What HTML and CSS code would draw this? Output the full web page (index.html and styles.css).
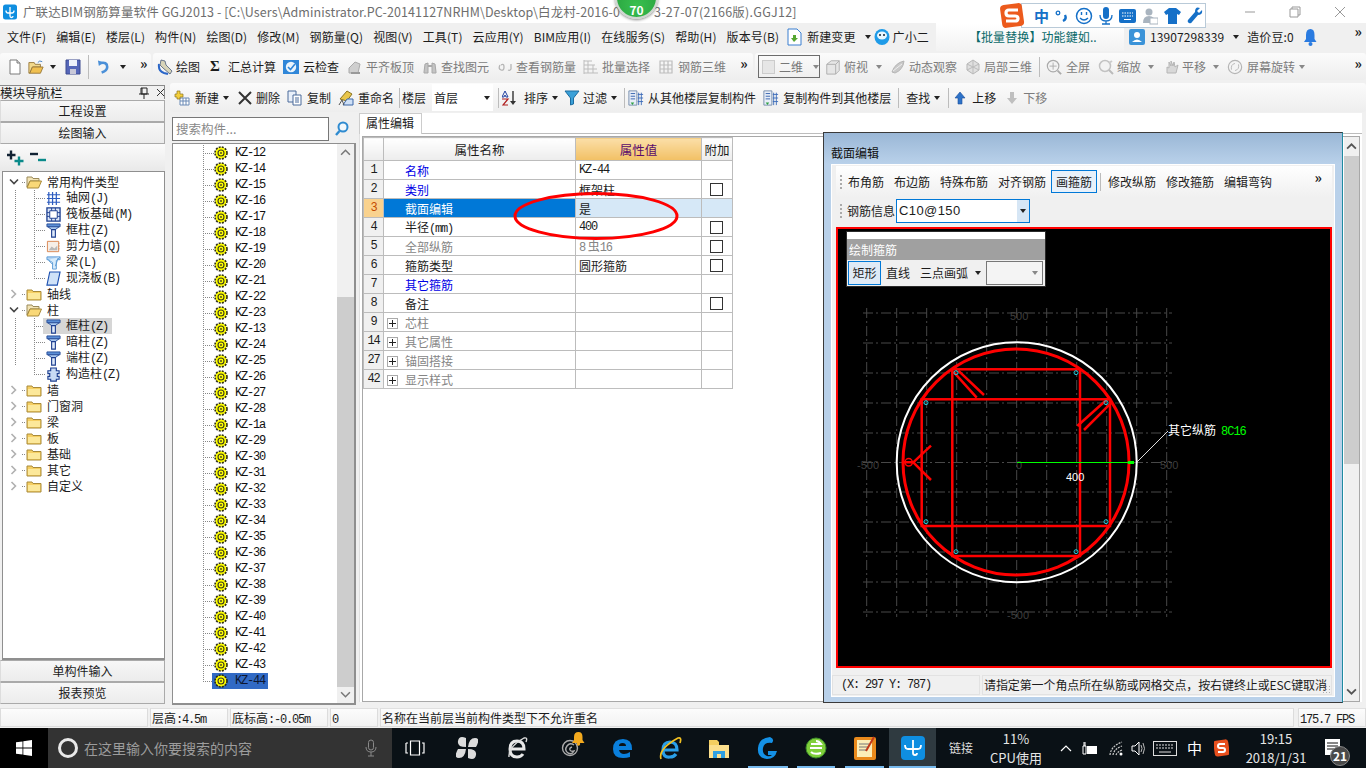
FILE: index.html
```html
<!DOCTYPE html>
<html lang="zh-CN">
<head>
<meta charset="utf-8">
<title>广联达BIM钢筋算量软件 GGJ2013</title>
<link rel="stylesheet" href="styles.css">
</head>
<body>
<svg class="defs" width="0" height="0">
  <symbol id="folder" viewBox="0 0 16 16"><path d="M1 4h5l1 1.500h8V14H1z" fill="#f6cf63" stroke="#a88a3a"/><path d="M2 7h12v6H2z" fill="#fce89a"/></symbol>
  <symbol id="folderopen" viewBox="0 0 16 16"><path d="M1 3h5l1 1.500h6V7H4L1 13z" fill="#f2e3b5" stroke="#9a8a5a"/><path d="M4 7h11.500l-3 7H1z" fill="#f9d878" stroke="#a88a3a"/></symbol>
  <symbol id="column" viewBox="0 0 16 16"><path d="M1 1h14v3H1z" fill="#5b8fd6" stroke="#2a4f9a"/><path d="M2 4l4 3h4l4-3z" fill="#a9c8ef" stroke="#2a4f9a"/><path d="M6 7h4v8H6z" fill="#dfeafa" stroke="#1d3f90" stroke-width="1.200"/></symbol>
  <symbol id="kz" viewBox="0 0 14 14"><circle cx="7" cy="7" r="5.800" fill="#ff0"/><circle cx="7" cy="7" r="6" fill="none" stroke="#2e2e10" stroke-width="1.600" stroke-dasharray="2 1.150"/><circle cx="7" cy="7" r="3" fill="#ff0" stroke="#3a3a20" stroke-width="1.100"/><circle cx="7" cy="7" r=".9" fill="#3a3a20"/></symbol>
  <symbol id="grid" viewBox="0 0 16 16"><path d="M3 1v14M7 1v14M11 1v14M1 4h14M1 8h14M1 12h14" stroke="#2d5cc0" stroke-width="1.300" fill="none"/></symbol>
  <symbol id="raft" viewBox="0 0 16 16"><path d="M1 1h14v14H1z" fill="#dce7f8" stroke="#1d3f90" stroke-width="1.400"/><path d="M4 4h8v8H4z" fill="#fff" stroke="#1d3f90"/><path d="M1 6h3M1 10h3M12 6h3M12 10h3M6 1v3M10 1v3M6 12v3M10 12v3" stroke="#1d3f90"/></symbol>
  <symbol id="wall" viewBox="0 0 16 16"><path d="M1.500 2.500h12v11h-12z" fill="#f6efe8" stroke="#d98550"/><path d="M3 12l3-4 3 2 3-3v5z" fill="#b9b9b9"/><path d="M14 4v1M14 7v1M14 10v1" stroke="#d98550"/></symbol>
  <symbol id="beam" viewBox="0 0 16 16"><path d="M1 2h14v3H1z" fill="#b6d5f3" stroke="#5b9bd5"/><path d="M2 5l5 3v7h4V6l4-4" fill="#d9ecfb" stroke="#5b9bd5"/><path d="M3 6l4 4M13 3l-3 9" stroke="#5b9bd5"/></symbol>
  <symbol id="slab" viewBox="0 0 16 16"><path d="M4 1h11l-3 14H1z" fill="#cfe2f8" stroke="#1d50b0" stroke-width="1.200"/></symbol>
  <symbol id="ccol" viewBox="0 0 16 16"><path d="M5 1h6v3h3v3h-2v3h2v3h-3v2H5v-2H2v-3h2V7H2V4h3z" fill="#c8daf4" stroke="#1d3f90" stroke-width="1.200"/></symbol>
  <symbol id="new" viewBox="0 0 16 16"><path d="M3 1h7l3 3v11H3z" fill="#fff" stroke="#7a7a7a"/><path d="M10 1v3h3" fill="#ddd" stroke="#7a7a7a"/></symbol>
  <symbol id="open" viewBox="0 0 18 16"><path d="M1 3h6l1 2h6v3H5l-3 7H1z" fill="#f2d98c" stroke="#96773a"/><path d="M5 8h12l-3 7H2z" fill="#f0c050" stroke="#96773a"/><path d="M11 3q2-3 5-1" stroke="#3a7ac0" fill="none"/></symbol>
  <symbol id="save" viewBox="0 0 16 16"><path d="M1 1h14v14H1z" fill="#5566b8" stroke="#3c4a90"/><path d="M4 1h8v6H4z" fill="#eef1fa"/><path d="M5 10h6v5H5z" fill="#c8c8d8"/></symbol>
  <symbol id="undo" viewBox="0 0 14 16"><path d="M3 4q8-2 8 4 0 4-6 6" fill="none" stroke="#4b90d8" stroke-width="2.800"/><path d="M1 1l1 6 5-4z" fill="#4b90d8"/></symbol>
  <symbol id="draw" viewBox="0 0 16 16"><path d="M4 1l4 1 1 4 6 6-2 3-7-6-3-3z" fill="#d8d4b8" stroke="#4a5a7a" stroke-width=".8"/><path d="M2 5q-1 7 5 9l4 1" fill="none" stroke="#2a66c8" stroke-width="2"/></symbol>
  <symbol id="cloud" viewBox="0 0 16 16"><path d="M0 1h16v14H0z" fill="#2f86d8"/><circle cx="8" cy="8" r="5.200" fill="#eaf4fc"/><path d="M5 8l2.500 2.500L12 5" stroke="#2f86d8" stroke-width="1.600" fill="none"/></symbol>
  <symbol id="gflat" viewBox="0 0 16 16"><path d="M2 14V9l6-6 5 2-2 9z" fill="#cfcfcf" stroke="#aaa"/><path d="M4 14h9" stroke="#999" stroke-width="2"/></symbol>
  <symbol id="gbino" viewBox="0 0 16 16"><path d="M2 13l1-8 3-1v10H2zM14 13l-1-8-3-1v10h4z" fill="#c4c4c4" stroke="#a8a8a8"/><path d="M6 7h4" stroke="#aaa" stroke-width="2"/></symbol>
  <symbol id="grebar" viewBox="0 0 16 16"><path d="M3 6Q1 10 4 11t3-3-3-2M14 5v5q-1 2-3 1" fill="none" stroke="#b5b5b5" stroke-width="1.300"/></symbol>
  <symbol id="gbatch" viewBox="0 0 16 16"><path d="M1 1v14M1 2h8M1 6h11M1 10h13M1 14h14M5 2v12M10 6v8" stroke="#bdbdbd" fill="none"/></symbol>
  <symbol id="g3d" viewBox="0 0 16 16"><path d="M2 2h12v12H2zM6 2v12M10 2v12M2 6h12M2 10h12" stroke="#bdbdbd" fill="none" stroke-width="1.200"/></symbol>
  <symbol id="gcube" viewBox="0 0 18 18"><path d="M2 6l5-4h9v11l-4 4H2z" fill="#e6e6e6" stroke="#aaa"/><path d="M2 6h10v11M12 6l4-4" fill="none" stroke="#aaa"/></symbol>
  <symbol id="gorbit" viewBox="0 0 16 16"><path d="M2 13Q5 4 14 2q-1 9-9 12z" fill="#c9c9c9" stroke="#b5b5b5"/><path d="M3 12L12 5" stroke="#eee"/></symbol>
  <symbol id="glocal" viewBox="0 0 16 16"><path d="M8 1l6 4v6l-6 4-6-4V5z" fill="#e0e0e0" stroke="#b5b5b5"/><path d="M8 1v14M2 5l12 6M14 5L2 11" stroke="#bbb"/></symbol>
  <symbol id="gfull" viewBox="0 0 18 18"><circle cx="8" cy="8" r="6.500" fill="#f3f3f3" stroke="#aaa" stroke-width="1.300"/><path d="M8 4v8M4 8h8" stroke="#aaa"/><path d="M13 13l4 4" stroke="#aaa" stroke-width="2"/></symbol>
  <symbol id="gzoom" viewBox="0 0 16 16"><circle cx="7" cy="7" r="5.500" fill="#f3f3f3" stroke="#c2c2c2" stroke-width="1.500"/><path d="M11 11l4 4" stroke="#bbb" stroke-width="2"/><path d="M11 4l3-2" stroke="#ccc" stroke-width="2"/></symbol>
  <symbol id="gpan" viewBox="0 0 16 16"><path d="M3 14V8l2 1V3l2 4V2l2 5 1-4 1 5 3-2-2 8H3z" fill="#d8d8d8" stroke="#b5b5b5"/></symbol>
  <symbol id="grot" viewBox="0 0 18 18"><circle cx="9" cy="9" r="7.500" fill="#f4f4f4" stroke="#b5b5b5" stroke-width="1.300"/><path d="M5 12q-1-6 4-7M13 6q1 6-4 7" stroke="#b5b5b5" fill="none"/></symbol>
  <symbol id="addnew" viewBox="0 0 16 16"><path d="M6 8h9v7H6z" fill="#fff" stroke="#6a8ab5"/><path d="M6 11h9M9 8v7M12 8v7" stroke="#6a8ab5"/><path d="M3 1h3v3h3v3H6v2H3V7H1V4h2z" fill="#f4cf3c" stroke="#8a7320" stroke-width=".7"/></symbol>
  <symbol id="del" viewBox="0 0 16 16"><path d="M2 2l12 12M14 2L2 14" stroke="#333" stroke-width="2"/></symbol>
  <symbol id="copy" viewBox="0 0 16 16"><path d="M1 1h8v11H1z" fill="#e9f0fa" stroke="#4a6a9a"/><path d="M6 5h8v10H6z" fill="#fff" stroke="#4a6a9a"/><path d="M8 8h4M8 10h4M8 12h4" stroke="#4a6a9a"/></symbol>
  <symbol id="rename" viewBox="0 0 16 16"><path d="M2 9l7-8 5 3-5 7z" fill="#e8c54a" stroke="#8a7320"/><path d="M9 9h6v6H5z" fill="#cfe0f6" stroke="#3a66a8"/><path d="M1 15l3-5 2 5" stroke="#555" fill="none"/></symbol>
  <symbol id="sort" viewBox="0 0 16 16"><path d="M3 1l3 6H4L3 5 2 7H0z" fill="none" stroke="#2040a0"/><path d="M0 9h6L1 15h5" fill="none" stroke="#b02020" stroke-width="1.200"/><path d="M11 1v12" stroke="#333" stroke-width="1.400"/><path d="M8 11l3 4 3-4z" fill="#333"/></symbol>
  <symbol id="filter" viewBox="0 0 16 16"><path d="M1 1h14L9.500 8v6L6.500 15V8z" fill="#3aa0d8" stroke="#1c6ca0"/></symbol>
  <symbol id="cpfrom" viewBox="0 0 18 18"><path d="M1 1h9v16H1z" fill="#e8eef8" stroke="#7088a8"/><path d="M3 4h5M3 7h5M3 10h5" stroke="#2a5aa8"/><path d="M3 14h4l-2 3z" fill="#2ca040"/><path d="M12 3v14M15 3v14M11 5h6M11 9h6M11 13h6" stroke="#3a6ab8"/></symbol>
  <symbol id="up" viewBox="0 0 12 16"><path d="M6 2l5 6H8v6H4V8H1z" fill="#2d72c8" stroke="#1c4f9a" stroke-width=".6"/></symbol>
  <symbol id="down" viewBox="0 0 12 16"><path d="M6 14L1 8h3V2h4v6h3z" fill="#bfbfbf"/></symbol>
  <symbol id="search" viewBox="0 0 16 16"><circle cx="9" cy="6" r="4.500" fill="#f2f8fc" stroke="#2f8bd0" stroke-width="2"/><path d="M5.500 10L2 14" stroke="#2f8bd0" stroke-width="2.400"/></symbol>
  <symbol id="chevr" viewBox="0 0 8 10"><path d="M1.500 1l4 4-4 4" fill="none" stroke="#b0b0b0" stroke-width="1.600"/></symbol>
  <symbol id="chevd" viewBox="0 0 10 8"><path d="M1 1.500l4 4 4-4" fill="none" stroke="#444" stroke-width="1.600"/></symbol>
</svg>

<div class="app">
  <header class="titlebar">
    <svg class="appicon" viewBox="0 0 14 16"><rect width="14" height="15" y=".5" rx="2.500" fill="#0f8ee0"/><path d="M7 3v9a1.500 1.500 0 0 0 3 0M3 6.500q0 2.500 2 2.500h4q2 0 2-2.500" stroke="#fff" stroke-width="1.300" fill="none"/></svg>
    <span class="titletext">广联达BIM钢筋算量软件 GGJ2013 - [C:\Users\Administrator.PC-20141127NRHM\Desktop\白龙村-2016-0</span>
    <span class="titletail">3-27-07(2166版).GGJ12]</span>
    <div class="winctl">
      <svg class="min" width="12" height="12" viewBox="0 0 12 12"><path d="M1 6h10" stroke="#999"/></svg>
      <svg class="rest" width="12" height="12" viewBox="0 0 12 12"><path d="M3 3V1h8v8H9M1 3h8v8H1z" stroke="#999" fill="none"/></svg>
      <svg class="clos" width="12" height="12" viewBox="0 0 12 12"><path d="M1 1l10 10M11 1L1 11" stroke="#999"/></svg>
    </div>
  </header>

  <nav class="menubar">
    <span>文件(F)</span><span>编辑(E)</span><span>楼层(L)</span><span>构件(N)</span><span>绘图(D)</span><span>修改(M)</span><span>钢筋量(Q)</span><span>视图(V)</span><span>工具(T)</span><span>云应用(Y)</span><span>BIM应用(I)</span><span>在线服务(S)</span><span>帮助(H)</span><span>版本号(B)</span>
    <span class="menu-ico neu"><svg width="15" height="18" viewBox="0 0 15 18"><path d="M1 1h9l4 4v12H1z" fill="#fff" stroke="#3a7fd0"/><path d="M7 14l-3-4h2V7h3v3h2z" fill="#55a630"/></svg>新建变更<i class="caret"></i></span>
    <span class="menu-ico xiao"><svg width="16" height="18" viewBox="0 0 16 18"><ellipse cx="8" cy="9" rx="7.500" ry="8" fill="#1e9be8"/><ellipse cx="8" cy="7.500" rx="5" ry="4" fill="#e8f7ff"/><circle cx="6" cy="7" r="1" fill="#123"/><circle cx="10" cy="7" r="1" fill="#123"/></svg>广小二</span>
    <span class="news"><span class="teal">【批量替换】功能鍵如..</span></span>
    <span class="menu-ico phone"><svg width="16" height="16" viewBox="0 0 16 16"><rect width="16" height="16" rx="2" fill="#3b93d8"/><circle cx="8" cy="6" r="3" fill="#fff"/><path d="M3 13q5-5 10 0z" fill="#fff"/></svg>13907298339<i class="caret"></i></span>
    <span class="dou">造价豆:0</span>
    <svg class="bell" width="13" height="18" viewBox="0 0 13 18"><path d="M6.500 1q4 0 4 6v4l2 3H0l2-3V7q0-6 4.500-6z" fill="#2a7be0"/><circle cx="6.500" cy="16" r="2" fill="#2a7be0"/></svg>
    <span class="gg">»</span>
  </nav>

  <div class="toolbar">
    <div class="tg tg-a">
      <svg class="ic"><use href="#new"/></svg>
      <svg class="ic ico-open ml5"><use href="#open"/></svg>
      <i class="caret ml6"></i>
      <svg class="ic ml9"><use href="#save"/></svg>
      <i class="sep ml7 tall"></i>
      <svg class="ic ml8 ico-undo"><use href="#undo"/></svg>
      <i class="caret ml10"></i>
      <span class="gg ml14">»</span>
    </div>
    <div class="tg tg-b">
      <span class="ti ml4"><svg class="ic"><use href="#draw"/></svg>绘图</span>
      <b class="sigma ml10">Σ</b>
      <span class="ti ml8">汇总计算</span>
      <span class="ti ml7 gap4"><svg class="ic"><use href="#cloud"/></svg>云检查</span>
      <span class="ti ml8 off"><svg class="ic"><use href="#gflat"/></svg>平齐板顶</span>
      <span class="ti ml8 off"><svg class="ic"><use href="#gbino"/></svg>查找图元</span>
      <span class="ti ml8 off"><svg class="ic"><use href="#grebar"/></svg>查看钢筋量</span>
      <span class="ti ml7 off"><svg class="ic"><use href="#gbatch"/></svg>批量选择</span>
      <span class="ti ml8 off gap4"><svg class="ic"><use href="#g3d"/></svg>钢筋三维</span>
      <span class="gg ml14">»</span>
    </div>
    <div class="tg tg-c">
      <span class="combo2d ml3 off"><i class="sq"></i>二维<i class="caret g ml10"></i></span>
      <span class="ti ml5 off"><svg class="ic"><use href="#gcube"/></svg>俯视</span><i class="caret g ml8"></i>
      <span class="ti ml8 off"><svg class="ic"><use href="#gorbit"/></svg>动态观察</span>
      <span class="ti ml8 off"><svg class="ic"><use href="#glocal"/></svg>局部三维</span>
      <i class="sep ml7"></i>
      <span class="ti ml6 off gap4"><svg class="ic"><use href="#gfull"/></svg>全屏</span>
      <span class="ti ml8 off"><svg class="ic"><use href="#gzoom"/></svg>缩放</span><i class="caret g ml7"></i>
      <span class="ti ml10 off gap2"><svg class="ic"><use href="#gpan"/></svg>平移</span><i class="caret g ml7"></i>
      <span class="ti ml8 off gap4"><svg class="ic"><use href="#grot"/></svg>屏幕旋转</span><i class="caret g ml4"></i>
      <span class="gg end">»</span>
    </div>
  </div>

  <div class="workspace">
    <aside class="nav">
      <div class="navhead"><span>模块导航栏</span>
        <svg class="pin" width="10" height="12" viewBox="0 0 10 12"><path d="M2 1h6v6H2zM0 7h10M5 7v5M3 1v6" stroke="#222" fill="none"/></svg>
        <svg class="navx" width="9" height="9" viewBox="0 0 9 9"><path d="M1 1l7 7M8 1L1 8" stroke="#333"/></svg></div>
      <div class="navbtn">工程设置</div>
      <div class="navbtn">绘图输入</div>
      <div class="navtools">
        <svg width="17" height="17" viewBox="0 0 17 17"><path d="M4 1.500v9M-.500 6h9" stroke="#123" stroke-width="2.400"/><path d="M12 7.500v9M7.500 12h9" stroke="#0a8a8a" stroke-width="2.400"/></svg>
        <svg class="ml6" width="17" height="17" viewBox="0 0 17 17"><path d="M0 5h8" stroke="#123" stroke-width="2.400"/><path d="M8 11h8" stroke="#0a8a8a" stroke-width="2.400"/></svg>
      </div>
      <div class="tree">
        <div class="tr"><svg class="ch"><use href="#chevd"/></svg><i class="dot"></i><svg class="fo"><use href="#folderopen"/></svg><span>常用构件类型</span></div>
        <div class="tr kid"><i class="vl"></i><i class="elbow"></i><svg class="ci"><use href="#grid"/></svg><span>轴网<em>(J)</em></span></div>
        <div class="tr kid"><i class="vl"></i><i class="elbow"></i><svg class="ci"><use href="#raft"/></svg><span>筏板基础<em>(M)</em></span></div>
        <div class="tr kid"><i class="vl"></i><i class="elbow"></i><svg class="ci"><use href="#column"/></svg><span>框柱<em>(Z)</em></span></div>
        <div class="tr kid"><i class="vl"></i><i class="elbow"></i><svg class="ci"><use href="#wall"/></svg><span>剪力墙<em>(Q)</em></span></div>
        <div class="tr kid"><i class="vl"></i><i class="elbow"></i><svg class="ci"><use href="#beam"/></svg><span>梁<em>(L)</em></span></div>
        <div class="tr kid"><i class="vl end"></i><i class="elbow last"></i><svg class="ci"><use href="#slab"/></svg><span>现浇板<em>(B)</em></span></div>
        <div class="tr"><svg class="ch"><use href="#chevr"/></svg><i class="dot"></i><svg class="fo"><use href="#folder"/></svg><span>轴线</span></div>
        <div class="tr"><svg class="ch"><use href="#chevd"/></svg><i class="dot"></i><svg class="fo"><use href="#folderopen"/></svg><span>柱</span></div>
        <div class="tr kid"><i class="vl"></i><i class="elbow"></i><span class="hl"><svg class="ci"><use href="#column"/></svg><span>框柱<em>(Z)</em></span></span></div>
        <div class="tr kid"><i class="vl"></i><i class="elbow"></i><svg class="ci"><use href="#column"/></svg><span>暗柱<em>(Z)</em></span></div>
        <div class="tr kid"><i class="vl"></i><i class="elbow"></i><svg class="ci"><use href="#column"/></svg><span>端柱<em>(Z)</em></span></div>
        <div class="tr kid"><i class="vl end"></i><i class="elbow last"></i><svg class="ci"><use href="#ccol"/></svg><span>构造柱<em>(Z)</em></span></div>
        <div class="tr"><svg class="ch"><use href="#chevr"/></svg><i class="dot"></i><svg class="fo"><use href="#folder"/></svg><span>墙</span></div>
        <div class="tr"><svg class="ch"><use href="#chevr"/></svg><i class="dot"></i><svg class="fo"><use href="#folder"/></svg><span>门窗洞</span></div>
        <div class="tr"><svg class="ch"><use href="#chevr"/></svg><i class="dot"></i><svg class="fo"><use href="#folder"/></svg><span>梁</span></div>
        <div class="tr"><svg class="ch"><use href="#chevr"/></svg><i class="dot"></i><svg class="fo"><use href="#folder"/></svg><span>板</span></div>
        <div class="tr"><svg class="ch"><use href="#chevr"/></svg><i class="dot"></i><svg class="fo"><use href="#folder"/></svg><span>基础</span></div>
        <div class="tr"><svg class="ch"><use href="#chevr"/></svg><i class="dot"></i><svg class="fo"><use href="#folder"/></svg><span>其它</span></div>
        <div class="tr"><svg class="ch"><use href="#chevr"/></svg><i class="dot"></i><svg class="fo"><use href="#folder"/></svg><span>自定义</span></div>
      </div>
      <div class="navbtn">单构件输入</div>
      <div class="navbtn">报表预览</div>
    </aside>

    <div class="main">
      <div class="rowbar">
        <span class="ti gap5"><svg class="ic"><use href="#addnew"/></svg>新建</span><i class="caret ml4"></i>
        <span class="ti ml8"><svg class="ic"><use href="#del"/></svg>删除</span>
        <span class="ti ml7 gap4"><svg class="ic"><use href="#copy"/></svg>复制</span>
        <span class="ti ml7 gap4"><svg class="ic"><use href="#rename"/></svg>重命名</span>
        <i class="sep ml5"></i>
        <span class="ti ml2">楼层</span>
        <span class="floor ml6">首层<i class="caret"></i></span>
        <i class="sep ml5"></i>
        <span class="ti ml3 gap6"><svg class="ic"><use href="#sort"/></svg>排序</span><i class="caret ml4"></i>
        <span class="ti ml6"><svg class="ic"><use href="#filter"/></svg>过滤</span><i class="caret ml4"></i>
        <i class="sep ml7"></i>
        <span class="ti ml3 gap4"><svg class="ic"><use href="#cpfrom"/></svg>从其他楼层复制构件</span>
        <span class="ti ml7 gap4"><svg class="ic"><use href="#cpfrom"/></svg>复制构件到其他楼层</span>
        <i class="sep ml7"></i>
        <span class="ti ml7">查找</span><i class="caret ml4"></i>
        <i class="sep ml8"></i>
        <span class="ti ml5 gap6"><svg class="ia"><use href="#up"/></svg>上移</span>
        <span class="ti ml10 off gap5"><svg class="ia"><use href="#down"/></svg>下移</span>
      </div>
      <div class="panes">
        <div class="listcol">
          <div class="searchrow">
            <span class="searchbox">搜索构件...</span>
            <svg class="searchico"><use href="#search"/></svg>
          </div>
          <div class="listbox">
            <ul class="klist">
              <li><i class="elbow"></i><span class="kn"><svg><use href="#kz"/></svg>KZ-12</span></li>
              <li><i class="elbow"></i><span class="kn"><svg><use href="#kz"/></svg>KZ-14</span></li>
              <li><i class="elbow"></i><span class="kn"><svg><use href="#kz"/></svg>KZ-15</span></li>
              <li><i class="elbow"></i><span class="kn"><svg><use href="#kz"/></svg>KZ-16</span></li>
              <li><i class="elbow"></i><span class="kn"><svg><use href="#kz"/></svg>KZ-17</span></li>
              <li><i class="elbow"></i><span class="kn"><svg><use href="#kz"/></svg>KZ-18</span></li>
              <li><i class="elbow"></i><span class="kn"><svg><use href="#kz"/></svg>KZ-19</span></li>
              <li><i class="elbow"></i><span class="kn"><svg><use href="#kz"/></svg>KZ-20</span></li>
              <li><i class="elbow"></i><span class="kn"><svg><use href="#kz"/></svg>KZ-21</span></li>
              <li><i class="elbow"></i><span class="kn"><svg><use href="#kz"/></svg>KZ-22</span></li>
              <li><i class="elbow"></i><span class="kn"><svg><use href="#kz"/></svg>KZ-23</span></li>
              <li><i class="elbow"></i><span class="kn"><svg><use href="#kz"/></svg>KZ-13</span></li>
              <li><i class="elbow"></i><span class="kn"><svg><use href="#kz"/></svg>KZ-24</span></li>
              <li><i class="elbow"></i><span class="kn"><svg><use href="#kz"/></svg>KZ-25</span></li>
              <li><i class="elbow"></i><span class="kn"><svg><use href="#kz"/></svg>KZ-26</span></li>
              <li><i class="elbow"></i><span class="kn"><svg><use href="#kz"/></svg>KZ-27</span></li>
              <li><i class="elbow"></i><span class="kn"><svg><use href="#kz"/></svg>KZ-28</span></li>
              <li><i class="elbow"></i><span class="kn"><svg><use href="#kz"/></svg>KZ-1a</span></li>
              <li><i class="elbow"></i><span class="kn"><svg><use href="#kz"/></svg>KZ-29</span></li>
              <li><i class="elbow"></i><span class="kn"><svg><use href="#kz"/></svg>KZ-30</span></li>
              <li><i class="elbow"></i><span class="kn"><svg><use href="#kz"/></svg>KZ-31</span></li>
              <li><i class="elbow"></i><span class="kn"><svg><use href="#kz"/></svg>KZ-32</span></li>
              <li><i class="elbow"></i><span class="kn"><svg><use href="#kz"/></svg>KZ-33</span></li>
              <li><i class="elbow"></i><span class="kn"><svg><use href="#kz"/></svg>KZ-34</span></li>
              <li><i class="elbow"></i><span class="kn"><svg><use href="#kz"/></svg>KZ-35</span></li>
              <li><i class="elbow"></i><span class="kn"><svg><use href="#kz"/></svg>KZ-36</span></li>
              <li><i class="elbow"></i><span class="kn"><svg><use href="#kz"/></svg>KZ-37</span></li>
              <li><i class="elbow"></i><span class="kn"><svg><use href="#kz"/></svg>KZ-38</span></li>
              <li><i class="elbow"></i><span class="kn"><svg><use href="#kz"/></svg>KZ-39</span></li>
              <li><i class="elbow"></i><span class="kn"><svg><use href="#kz"/></svg>KZ-40</span></li>
              <li><i class="elbow"></i><span class="kn"><svg><use href="#kz"/></svg>KZ-41</span></li>
              <li><i class="elbow"></i><span class="kn"><svg><use href="#kz"/></svg>KZ-42</span></li>
              <li><i class="elbow"></i><span class="kn"><svg><use href="#kz"/></svg>KZ-43</span></li>
              <li><i class="elbow last"></i><span class="kn sel"><svg><use href="#kz"/></svg>KZ-44</span></li>
            </ul>
            <div class="vscroll">
              <svg class="sa" viewBox="0 0 10 6"><path d="M1 5l4-4 4 4" fill="none" stroke="#777" stroke-width="1.400"/></svg>
              <div class="track"><div class="thumb"></div></div>
              <svg class="sa" viewBox="0 0 10 6"><path d="M1 1l4 4 4-4" fill="none" stroke="#777" stroke-width="1.400"/></svg>
            </div>
          </div>
        </div>

        <div class="prop">
          <div class="tabs"><span class="tab">属性编辑</span></div>
          <div class="propbody">
            <div class="frame">
              <table class="ptable">
                <colgroup><col class="c0"><col class="c1"><col class="c2"><col class="c3"></colgroup>
                <thead><tr><th></th><th>属性名称</th><th class="vh">属性值</th><th>附加</th></tr></thead>
                <tbody>
                  <tr><th>1</th><td class="n blue">名称</td><td class="m">KZ-44</td><td></td></tr>
                  <tr><th>2</th><td class="n blue">类别</td><td>框架柱</td><td class="cb"><i></i></td></tr>
                  <tr class="cur"><th>3</th><td class="n">截面编辑</td><td>是</td><td></td></tr>
                  <tr><th>4</th><td class="n">半径<em>(mm)</em></td><td class="m">400</td><td class="cb"><i></i></td></tr>
                  <tr><th>5</th><td class="n gray">全部纵筋</td><td class="gray"><span class="m">8</span> 虫<span class="m">16</span></td><td class="cb"><i></i></td></tr>
                  <tr><th>6</th><td class="n">箍筋类型</td><td>圆形箍筋</td><td class="cb"><i></i></td></tr>
                  <tr><th>7</th><td class="n blue">其它箍筋</td><td></td><td></td></tr>
                  <tr><th>8</th><td class="n">备注</td><td></td><td class="cb"><i></i></td></tr>
                  <tr><th>9</th><td class="n gray ex"><i class="plus"></i>芯柱</td><td></td><td></td></tr>
                  <tr><th>14</th><td class="n gray ex"><i class="plus"></i>其它属性</td><td></td><td></td></tr>
                  <tr><th>27</th><td class="n gray ex"><i class="plus"></i>锚固搭接</td><td></td><td></td></tr>
                  <tr><th>42</th><td class="n gray ex"><i class="plus"></i>显示样式</td><td></td><td></td></tr>
                </tbody>
              </table>
              <div class="vscroll big">
                <svg class="sa" viewBox="0 0 10 6"><path d="M1 5l4-4 4 4" fill="none" stroke="#555" stroke-width="1.600"/></svg>
                <div class="track"><div class="thumb"></div></div>
                <svg class="sa" viewBox="0 0 10 6"><path d="M1 1l4 4 4-4" fill="none" stroke="#555" stroke-width="1.600"/></svg>
              </div>
            </div>
          </div>
        </div>
      </div>
    </div>
  </div>

  <div class="statusbar">
    <span class="sc s0"></span>
    <span class="sc s1">层高<em>:4.5m</em></span>
    <span class="sc s2">底标高<em>:-0.05m</em></span>
    <span class="sc s3"><em>0</em></span>
    <span class="sc s4">名称在当前层当前构件类型下不允许重名</span>
    <span class="sc s5"><em>175.7 FPS</em></span>
  </div>

  <footer class="taskbar">
    <div class="start"><svg width="16" height="16" viewBox="0 0 16 16"><path d="M0 2.300l6.500-.9v6.200H0zM7.300 1.300L16 0v7.600H7.300zM0 8.400h6.500v6.200L0 13.700zM7.300 8.400H16V16l-8.700-1.300z" fill="#fff"/></svg></div>
    <div class="cortana">
      <i class="ring"></i><span>在这里输入你要搜索的内容</span>
      <svg class="mic" width="12" height="18" viewBox="0 0 12 18"><rect x="3.500" y="1" width="5" height="10" rx="2.500" fill="none" stroke="#8a8a8a"/><path d="M1 8q0 5 5 5t5-5M6 13v4M3 17h6" fill="none" stroke="#8a8a8a"/></svg>
    </div>
    <div class="slot w46"><svg width="20" height="16" viewBox="0 0 20 16"><path d="M5.500 1h9v14h-9zM1 3h2M1 3v10h2M17 3h2v10h-2" fill="none" stroke="#fff" stroke-width="1.200"/></svg></div>
    <div class="slot w4"></div>
    <div class="slot w50"><svg width="22" height="24" viewBox="0 0 22 24"><path d="M10 11Q1 11 2 5t8-3zM12 11q1-9 7-9t1 9zM10 13q-1 9-7 9T2 13zM12 13q9 0 8 6t-8 3z" fill="#dcdcdc"/></svg></div>
    <div class="slot w52"><svg width="24" height="26" viewBox="0 0 24 26"><path d="M4 14h14q0-8-7-8t-7 8 7 8q4 0 6-3" fill="none" stroke="#e8e8e8" stroke-width="3"/><path d="M3 22Q2 12 18 3q4-1 2 4" fill="none" stroke="#ddd" stroke-width="1.400"/></svg></div>
    <div class="slot w52"><svg width="18" height="18" viewBox="0 0 18 18"><circle cx="9" cy="9" r="7.500" fill="none" stroke="#aaa" stroke-width="1.400"/><path d="M13 6Q9 3 6 7t1 7q4 2 6-2-3 1-4-1t2-3" fill="none" stroke="#aaa" stroke-width="1.400"/></svg><svg class="minibell" width="13" height="15" viewBox="0 0 13 15"><path d="M6.500 1q4 0 4 5v3l2 3H0l2-3V6q0-5 4.500-5z" fill="#f2a91e"/><circle cx="6.500" cy="13" r="1.700" fill="#f2a91e"/></svg></div>
    <div class="slot w52"><svg width="24" height="24" viewBox="0 0 24 24"><path d="M3 13q0-10 10-10 9 0 9 10v1H9q1 4 5 4 3 0 6-2v5q-3 1-7 1-10 0-10-9zm6-3h7q0-3-3.500-3T9 10z" fill="#0a7fdc"/></svg></div>
    <div class="slot w44"><svg width="26" height="26" viewBox="0 0 26 26"><path d="M5 15h15q0-8-7-8t-7 8 7 7q4 0 6-3" fill="none" stroke="#2a9fe8" stroke-width="3.200"/><path d="M4 24Q1 14 21 3q4-1 2 5" fill="none" stroke="#f2c021" stroke-width="1.700"/></svg></div>
    <div class="slot w54"><svg width="22" height="22" viewBox="0 0 22 22"><path d="M1 3h8l2 2v4H1z" fill="#f4ce60"/><path d="M1 8h20v13H1z" fill="#fcdf8c"/><path d="M5 14h12v7H5z" fill="#2f9fe0"/><path d="M9 17h4v4H9z" fill="#fcdf8c"/></svg></div>
    <div class="slot w2"></div>
    <div class="slot w40 run"><svg width="24" height="26" viewBox="0 0 24 26"><path d="M14 2Q3 3 2 13t9 11q8 0 10-8h-9v4h4q-2 2-5 1-5-2-4-8t9-5q3-4-2-6z" fill="#1491e6"/></svg></div>
    <div class="slot w9"></div>
    <div class="slot w38 run"><svg width="22" height="26" viewBox="0 0 22 26"><circle cx="11" cy="13" r="10" fill="#7fcf3a" stroke="#3a8a2a"/><path d="M5 13h12M6 9h10q-2-3-5-3M6 17q3 3 10 1" stroke="#fff" stroke-width="2" fill="none"/></svg></div>
    <div class="slot w10"></div>
    <div class="slot w39 run"><svg width="24" height="26" viewBox="0 0 24 26"><rect x="1" y="2" width="22" height="23" rx="2" fill="#e98a1c"/><rect x="4" y="5" width="15" height="17" fill="#fbeeb8"/><path d="M6 9h10M6 12h10M6 15h7" stroke="#777"/><path d="M21 2L13 16" stroke="#c23a1a" stroke-width="2"/></svg></div>
    <div class="slot w5"></div>
    <div class="slot w47 run active"><svg width="24" height="24" viewBox="0 0 24 24"><rect width="24" height="24" rx="4" fill="#0f8ee0"/><path d="M12 4v13a2 2 0 0 0 4 0M4 9q0 4 3 4h10q3 0 3-4" stroke="#fff" stroke-width="1.800" fill="none"/></svg></div>
    <span class="lnk">链接</span>
    <div class="cpu"><span>11%</span><span>CPU使用</span></div>
    <svg class="tr1" width="12" height="8" viewBox="0 0 12 8"><path d="M1 7l5-5 5 5" fill="none" stroke="#fff" stroke-width="1.200"/></svg>
    <svg class="tr2" width="16" height="14" viewBox="0 0 16 14"><path d="M1 5h3v8H1z" fill="none" stroke="#fff"/><path d="M5 5h10v8H5z" fill="#fff"/><path d="M2 1v4M3 1v4" stroke="#fff"/></svg>
    <svg class="tr3" width="15" height="15" viewBox="0 0 15 15"><path d="M1 14Q2 5 13 1M4 14q1-6 9-9M7 14q1-3 6-5" fill="none" stroke="#ccc" stroke-width="1.200" stroke-dasharray="2 1"/><circle cx="12" cy="13" r="1.500" fill="#fff"/></svg>
    <svg class="tr4" width="15" height="15" viewBox="0 0 15 15"><path d="M1 5h3l4-4v13l-4-4H1z" fill="none" stroke="#fff"/><path d="M10 4q2 3.500 0 7M12 2q3 5.500 0 11" fill="none" stroke="#bbb"/></svg>
    <svg class="tr5" width="24" height="15" viewBox="0 0 24 15"><rect x=".5" y=".5" width="23" height="14" fill="none" stroke="#ddd"/><path d="M3 4h18M3 7h18" stroke="#ddd" stroke-dasharray="2 1"/><path d="M6 11h12" stroke="#ddd"/></svg>
    <b class="zhong">中</b>
    <svg class="tr6" width="15" height="18" viewBox="0 0 15 18"><rect y="1" width="15" height="16" rx="3" fill="#e8501e" transform="rotate(-8 7 9)"/><path d="M11 5H6q-2 0-2 2t2 2h3q2 0 2 2t-2 2H4" fill="none" stroke="#fff" stroke-width="2"/></svg>
    <div class="clock"><span>19:15</span><span>2018/1/31</span></div>
    <div class="notif"><svg width="15" height="16" viewBox="0 0 15 16"><path d="M0 0h15v16H0z" fill="#fff"/><path d="M2 4h11M2 7h11M2 10h7" stroke="#111"/></svg><b class="nbadge">21</b></div>
  </footer>
</div>

<div class="badge70"><b>70</b></div>

<div class="sogou">
  <svg class="slogo" width="26" height="27" viewBox="0 0 26 27"><rect x="2" y="2" width="22" height="23" rx="4" fill="#ec5a1c" transform="rotate(-8 13 13)"/><path d="M19 8h-9q-3 0-3 3t3 3h6q3 0 3 2.500t-3 2.500H7" fill="none" stroke="#fff" stroke-width="3.200"/></svg>
  <div class="sbar">
    <b class="szh">中</b>
    <svg width="14" height="14" viewBox="0 0 14 14"><circle cx="3" cy="4" r="1.800" fill="none" stroke="#1570c8" stroke-width="1.300"/><path d="M10 6q2 4-2 6" stroke="#1570c8" stroke-width="2.400" fill="none"/></svg>
    <svg width="18" height="18" viewBox="0 0 18 18"><circle cx="9" cy="9" r="7.500" fill="#fff" stroke="#1570c8" stroke-width="1.500"/><path d="M6.500 5v3M11.500 5v3M5 11q4 4 8 0" stroke="#1570c8" stroke-width="1.400" fill="none"/></svg>
    <svg width="14" height="18" viewBox="0 0 14 18"><rect x="4" y="0" width="6" height="12" rx="3" fill="#1570c8"/><path d="M1 8q0 6 6 6t6-6M7 14v3M3 17h8" fill="none" stroke="#1570c8" stroke-width="1.300"/></svg>
    <svg width="17" height="14" viewBox="0 0 17 14"><rect width="17" height="14" rx="2" fill="#1570c8"/><path d="M3 4h11M3 7h11" stroke="#fff" stroke-dasharray="1.500 1"/><path d="M5 10.500h7" stroke="#fff"/></svg>
    <svg width="16" height="18" viewBox="0 0 16 18"><circle cx="7" cy="5" r="3.500" fill="#a9b4bf"/><path d="M1 16q0-7 6-7t6 7z" fill="#a9b4bf"/><rect x="8" y="11" width="8" height="6" fill="#fff" stroke="#a9b4bf"/></svg>
    <svg width="17" height="16" viewBox="0 0 17 16"><path d="M5 0h7l5 4-2 3-2-1v10H4V6L2 7 0 4z" fill="#1570c8"/></svg>
    <svg width="16" height="18" viewBox="0 0 16 18"><path d="M15 3l-3 3-2-2 3-3Q8-1 8 5L1 13q-1 2 1 3t3-1l6-7q5 0 4-5z" fill="#1570c8"/></svg>
  </div>
</div>

<svg class="ellipse" width="170" height="52" viewBox="0 0 170 52"><ellipse cx="85" cy="26" rx="81" ry="22.500" fill="none" stroke="#f00" stroke-width="3"/></svg>

<section class="dialog">
  <h2 class="dtitle">截面编辑</h2>
  <div class="dbody">
    <div class="dbar db1">
      <i class="grip"></i>
      <span>布角筋</span><span>布边筋</span><span>特殊布筋</span><span>对齐钢筋</span><span class="on">画箍筋</span>
      <i class="sep"></i>
      <span>修改纵筋</span><span>修改箍筋</span><span>编辑弯钩</span>
      <span class="gg end">»</span>
    </div>
    <div class="dbar db2">
      <i class="grip"></i>
      <span class="lab">钢筋信息</span>
      <span class="dcombo"><span>C10@150</span><i class="dbtn"><i class="caret"></i></i></span>
    </div>
    <div class="canvas">
      <svg class="draw" viewBox="838 229 492 437" width="492" height="437">
        <g class="gridlines">
          <path d="M863 313H1172M863 343H1172M863 373H1172M863 403H1172M863 433H1172M863 462.500H1172M863 492H1172M863 522H1172M863 552H1172M863 582H1172M863 612H1172"/>
          <path d="M866.700 308V617M896.700 308V617M926.700 308V617M956.700 308V617M986.700 308V617M1016.700 308V617M1046.700 308V617M1076.700 308V617M1106.700 308V617M1136.700 308V617M1166.700 308V617"/>
        </g>
        <g class="axis"><text x="1010" y="320">500</text><text x="857" y="469">-500</text><text x="1160" y="469">500</text><text x="1016" y="469">0</text><text x="1007" y="619">-500</text></g>
        <circle cx="1016.700" cy="462.300" r="120" class="cwhite"/>
        <circle cx="1016" cy="462" r="113" class="cred"/>
        <g class="hoops">
          <rect x="921.700" y="399.300" width="188.300" height="126.700"/>
          <rect x="952.300" y="369.300" width="127.700" height="186.700"/>
          <path d="M953.300 371.700L976.700 397.700M958.300 370.700L984 395M1108.300 398.300L1077.300 426M1110.700 403.300L1084 430M913.300 462.300L931 445.700M913.300 462.300L931 480M902 462.300H913.300"/>
          <circle class="hk" cx="908.700" cy="462.300" r="3.700"/>
        </g>
        <g class="bars"><circle cx="926" cy="402.700" r="2"/><circle cx="956" cy="372.700" r="2"/><circle cx="1076" cy="372.700" r="2"/><circle cx="1106" cy="402.700" r="2"/><circle cx="926" cy="521.700" r="2"/><circle cx="956" cy="551.700" r="2"/><circle cx="1076" cy="551.700" r="2"/><circle cx="1106" cy="521.700" r="2"/></g>
        <path class="dim" d="M1017 462.500H1133"/><rect class="dimend" x="1128" y="461" width="6" height="3"/>
        <path class="lead" d="M1137 462L1168 431"/>
        <text class="t400" x="1066" y="481">400</text>
        <text class="tother" x="1168" y="435">其它纵筋</text>
        <text class="tgreen" x="1221" y="435">8C16</text>
      </svg>
      <div class="floatpanel">
        <div class="fpwhite"></div>
        <div class="fphead">绘制箍筋</div>
        <div class="fprow"><span class="on">矩形</span><span class="line">直线</span><span class="arc">三点画弧</span><i class="caret"></i><span class="fpcombo"><i class="caret g"></i></span></div>
      </div>
    </div>
    <div class="dstatus"><span class="ds1">(X: 297 Y: 787)</span><span class="ds2">请指定第一个角点所在纵筋或网格交点，按右键终止或ESC键取消<i class="rgrip"></i></span></div>
  </div>
</section>
</body>
</html>
```
FILE: styles.css
```css
*{box-sizing:border-box}
html,body{margin:0;padding:0}
body{width:1366px;height:768px;overflow:hidden;position:relative;background:#f0f0f0;color:#1c1c1c;font:12px/16px "Noto Sans CJK SC","Noto Sans",sans-serif}
em{font-style:normal;font-family:"Liberation Mono",monospace;font-size:12px;letter-spacing:-1.2px}
i{font-style:normal;display:block}
svg{display:block;flex:none}
.defs{position:absolute}
.app{width:1366px;height:768px;display:flex;flex-direction:column}

.ml2{margin-left:2px}.ml3{margin-left:3px}.ml4{margin-left:4px}.ml5{margin-left:5px}.ml6{margin-left:6px}.ml7{margin-left:7px}.ml8{margin-left:8px}.ml9{margin-left:9px}.ml10{margin-left:10px}.ml14{margin-left:14px}

.titlebar{height:23px;background:#fff;display:flex;align-items:center;padding-left:3px;color:#6e6e6e;white-space:nowrap}
.appicon{width:14px;height:16px}
.titletext{margin-left:6px;width:592px;font-size:12.500px;letter-spacing:.1px}
.titletail{margin-left:39px;font-size:12.500px;letter-spacing:.25px}
.winctl{margin-left:auto;display:flex;padding-right:20px}
.min{margin-right:33px}.rest{margin-right:33px}

.menubar{height:28px;display:flex;align-items:center;padding-left:7px;gap:10px;white-space:nowrap;background:#f0f0f0;letter-spacing:.1px}
.menu-ico{display:flex;align-items:center;gap:3px}
.neu{margin-left:-2px;gap:5px}
.menu-ico .caret{margin-left:4px}
.xiao{margin-left:-7px}
.news{margin-left:-3px;width:188px;height:28px;background:linear-gradient(#fff,#f2f2f2);display:flex;align-items:center;padding-left:33px;flex:none}
.teal{color:#0b6a6a}
.phone{margin-left:-5px}.phone svg{margin-right:2px}
.phone .caret{margin-left:6px}
.caret{width:0;height:0;border:3px solid transparent;border-top:4px solid #222;border-bottom:0;flex:none}
.caret.g{border-top-color:#888}
.dou{margin-left:-2px}
.bell{margin-left:0}
.gg{font-size:14px;font-weight:700;line-height:10px;height:14px;color:#222;flex:none}
.menubar .gg{margin-left:auto;margin-right:4px;align-self:flex-start;margin-top:3px}

.toolbar{height:28px;margin-top:2px;display:flex;gap:2px}
.tg{height:27px;display:flex;align-items:center;background:linear-gradient(#fbfbfb,#eeeeee);white-space:nowrap;border-radius:3px}
.tg-a{width:151px;padding-left:7px}
.tg-b{width:600px}
.tg-c{flex:1}
.ic{width:16px;height:16px}
.ia{width:12px;height:16px}
.ti{display:inline-flex;align-items:center;gap:3px;white-space:nowrap}
.gap2{gap:2px}.gap4{gap:4px}.gap5{gap:5px}.gap6{gap:6px}
.off{color:#7c7c7c}
.sep{width:1px;height:20px;background:#bcbcbc;flex:none}
.sep.tall{height:24px}
.ico-undo{width:13px}
.sigma{font:700 15px "Liberation Serif",serif;width:10px;text-align:center}
.tg .gg.end{margin-left:auto;margin-right:4px;align-self:flex-start;margin-top:5px}
.tg .gg{align-self:flex-start;margin-top:5px}
.combo2d{display:flex;align-items:center;width:62px;height:23px;border:1px solid #6c6c6c;padding-left:3px;color:#777}
.sq{width:14px;height:14px;background:#e6e6e6;border:1px solid #ccc;margin-right:4px}

.workspace{height:622px;margin-top:2px;display:flex}
.nav{width:170px;display:flex;flex-direction:column;padding-top:2px;flex:none}
.navhead{width:165px;height:14px;display:flex;align-items:center;font-size:12.500px;background:#f0f0f0;border:1px solid #8a8a8a;border-width:1px 1px 0 0;line-height:13px;margin-bottom:1px;white-space:nowrap;flex:none}
.navhead span{flex:none}
.pin{margin-left:76px}.navx{margin-left:7px}
.navbtn{width:165px;height:22px;flex:none;display:flex;align-items:center;justify-content:center;background:linear-gradient(#f7f7f7,#ececec);border:1px solid #aaa;border-left-color:#ddd}
.navtools{width:165px;height:27px;flex:none;display:flex;align-items:center;padding-left:7px;background:linear-gradient(#fbfbfb,#e9e9e9)}
.tree{width:163px;height:489px;flex:none;margin-left:2px;background:#fff;border:1px solid #8f8f8f;border-bottom-width:2px;padding-top:2px;overflow:hidden}
.tr{display:flex;align-items:center;height:16px;white-space:nowrap}
.ch{width:10px;height:10px;margin-left:6px}
.dot{width:4px;height:1px;background:repeating-linear-gradient(90deg,#888 0 1px,transparent 1px 2px);margin-left:3px}
.fo{width:16px;height:16px;margin-right:5px}
.vl{width:19px;height:16px;margin-left:12px;background:repeating-linear-gradient(#888 0 1px,transparent 1px 2px) 0 0/1px 100% no-repeat}
.vl.end{background:none}
.elbow{width:11px;height:16px;flex:none;background:repeating-linear-gradient(#888 0 1px,transparent 1px 2px) 0 0/1px 100% no-repeat,repeating-linear-gradient(90deg,#888 0 1px,transparent 1px 2px) 0 50%/100% 1px no-repeat}
.elbow.last{background:repeating-linear-gradient(#888 0 1px,transparent 1px 2px) 0 0/1px 50% no-repeat,repeating-linear-gradient(90deg,#888 0 1px,transparent 1px 2px) 0 50%/100% 1px no-repeat}
.ci{width:15px;height:15px;margin-left:1px;margin-right:5px}
.hl{display:flex;align-items:center;background:#d6d6d6;height:16px;margin-left:-2px;padding-left:2px;width:69px}

.main{flex:1;display:flex;flex-direction:column;min-width:0}
.rowbar{height:29px;background:linear-gradient(#fbfbfb,#eeeeee);display:flex;align-items:center;padding-left:4px;white-space:nowrap;flex:none;border-radius:3px}
.floor{width:61px;height:27px;background:#fff;display:flex;align-items:center;justify-content:space-between;padding:0 3px 0 2px}
.panes{flex:1;display:flex;min-height:0}
.listcol{width:184px;margin-left:2px;padding-top:5px;display:flex;flex-direction:column;flex:none}
.searchrow{height:24px;display:flex;align-items:center;margin-bottom:2px;flex:none}
.searchbox{width:157px;height:24px;background:#fff;border:1px solid #777;color:#888;font-size:12.500px;padding:3px 0 0 3px}
.searchico{width:16px;height:16px;margin-left:5px}
.listbox{height:562px;background:#fff;border:1px solid #8f8f8f;border-width:1px 2px 2px 1px;display:flex}
.klist{list-style:none;margin:0;padding:1px 0 0;flex:1;overflow:hidden}
.klist li{height:16px;display:flex;align-items:center;padding-left:30px}
.kn{display:flex;align-items:center;width:56px;height:16px;margin-left:-2px;padding-left:2px;font:12px/16px "Liberation Mono",monospace;letter-spacing:-1.2px;color:#111}
.kn svg{width:14px;height:14px;margin-right:7px}
.kn.sel{background:#316ac5;color:#0d1630}
.vscroll{width:17px;background:#f0f0f0;display:flex;flex-direction:column;align-items:center;flex:none}
.sa{width:11px;height:7px;margin:5px 0;flex:none}
.track{flex:1;width:100%;position:relative}
.thumb{position:absolute;left:0;right:0;top:136px;bottom:-1px;background:#cdcdcd}
.prop{flex:1;margin-left:3px;display:flex;flex-direction:column;min-width:0;padding-right:4px;padding-bottom:3px}
.tabs{height:21px;flex:none;border-bottom:1px solid #bdbdbd;background:#fff;margin-top:1px}
.tab{display:inline-block;width:63px;height:21px;background:#fff;border:1px solid #ccc;border-bottom:0;padding:1px 0 0 6px}
.propbody{flex:1;background:#fff;padding:2px 2px 0 3px;display:flex;min-height:0;border-left:1px solid #e0e0e0}
.frame{flex:1;border:1px solid #a8a8a8;display:flex;justify-content:space-between;align-items:stretch;margin-left:-1px;min-width:0}
.ptable{border-collapse:collapse;table-layout:fixed;width:369px;align-self:flex-start;border:1px solid #b0b0b0}
.c0{width:20px}.c1{width:192px}.c2{width:126px}.c3{width:31px}
.ptable th,.ptable td{border:1px solid #bcbcbc;padding:0;height:19px;line-height:17px;font-weight:400;overflow:hidden;white-space:nowrap}
.ptable thead th{height:23px;text-align:center;background:linear-gradient(#fff,#ececec);font-size:12.500px}
.ptable thead th.vh{background:linear-gradient(#fbdfa8,#f2c064);color:#5a0c6c}
.ptable tbody th{background:#f0f0f0;font:12px "Liberation Mono",monospace;letter-spacing:-1.2px;text-align:center}
.ptable td{padding-left:3px}
.ptable td.n{padding-left:21px}
.ptable td.ex{padding-left:3px}
.ptable .m,.ptable em{font:12px "Liberation Mono",monospace;letter-spacing:-1.2px}
.blue{color:#0000e6}
.gray,.ptable .gray{color:#858585}
.cur th{background:#f9d28e!important;color:#c44a00}
.cur td{background:#d6e8f7}
.cur td.n{background:#0078d7;color:#fff}
.cb i{width:13px;height:13px;border:1px solid #333;margin:0 auto;background:#fff;position:relative;left:-1px}
.ptable td.cb{padding-left:0}
.plus{display:inline-block;width:11px;height:11px;border:1px solid #aaa;margin-right:7px;vertical-align:-1px;background:linear-gradient(#222,#222) center/7px 1px no-repeat,linear-gradient(#222,#222) center/1px 7px no-repeat}
.big{width:15px}
.big .sa{margin:6px 0}
.big .thumb{top:0;bottom:auto;height:308px}

.statusbar{height:20px;margin-top:3px;display:flex;gap:2px;flex:none}
.sc{height:19px;background:linear-gradient(#fcfcfc,#f2f2f2);border:1px solid #dcdcdc;border-top-color:#e0e0e0;padding:0 1px;line-height:18px;white-space:nowrap}
.s0{width:148px}.s1{width:78px}.s2{width:98px}.s3{width:48px}.s4{width:914px}.s5{width:68px;margin-left:2px}

.taskbar{height:40px;background:#0a1116;display:flex;align-items:center;color:#ddd;position:relative;flex:none}
.start{width:48px;height:40px;display:flex;align-items:center;justify-content:center;background:#000}
.cortana{width:344px;height:40px;background:#333;display:flex;align-items:center;padding-left:10px;color:#9c9c9c;font-size:14px}
.ring{width:20px;height:20px;border:3px solid #e8e8e8;border-radius:50%;margin-right:6px}
.mic{margin-left:auto;margin-right:15px}
.slot{height:40px;display:flex;align-items:center;justify-content:center;position:relative;flex:none}
.w2{width:2px}.w4{width:4px}.w5{width:5px}.w9{width:9px}.w10{width:10px}.w38{width:38px}.w39{width:39px}.w40{width:40px}.w44{width:44px}.w46{width:46px}.w47{width:47px}.w50{width:50px}.w52{width:52px}.w54{width:54px}
.minibell{position:absolute;left:28px;top:3px}
.run::after{content:"";position:absolute;left:0;right:0;bottom:0;height:2px;background:#76b9ed}
.active{background:#2f3a40}
.lnk{margin-left:13px;color:#ddd}
.cpu{width:52px;margin-left:17px;display:flex;flex-direction:column;align-items:center;font-size:13px;line-height:19px;color:#e6e6e6;white-space:nowrap}
.tr1{margin-left:18px}
.tr2{margin-left:10px}
.tr3{margin-left:11px}
.tr4{margin-left:7px}
.tr5{margin-left:7px}
.zhong{margin-left:10px;font-size:15px;font-weight:400;color:#fff;width:16px}
.tr6{margin-left:11px}
.clock{width:66px;margin-left:14px;display:flex;flex-direction:column;align-items:center;font-size:13px;line-height:19px;color:#e6e6e6}
.notif{margin-left:auto;width:46px;height:40px;position:relative;padding:11px 0 0 5px;background:#0a1116}
.nbadge{position:absolute;left:10px;top:18px;width:20px;height:20px;border-radius:50%;background:#4a4a4a;border:1px solid #888;color:#fff;font-size:12px;line-height:18px;text-align:center}

.badge70{position:absolute;left:615px;top:-24px;width:43px;height:43px;border-radius:50%;background:radial-gradient(circle at 50% 70%,#39c04f,#239a3a);border:2px solid #cfd6d0;box-shadow:0 1px 3px #888;text-align:center;color:#fff}
.badge70 b{display:block;margin-top:24px;font-size:12px;line-height:16px}
.sogou{position:absolute;left:999px;top:2px;display:flex;align-items:center}
.sbar{width:185px;height:25px;background:#fff;border:1px solid #b9cad8;margin-left:-4px;display:flex;align-items:center;justify-content:space-between;padding:0 2px 0 12px}
.slogo{position:relative;z-index:1}
.szh{font-size:15px;color:#1570c8}
.ellipse{position:absolute;left:511px;top:190px}

.dialog{position:absolute;left:823px;top:132px;width:520px;height:571px;background:#b9d1ea;border:1px solid #3a3a3a;border-right-color:#1f8aa0;display:flex;flex-direction:column}
.dtitle{margin:0;height:31px;flex:none;font-size:12px;font-weight:400;padding:12px 0 0 7px;line-height:16px;background:linear-gradient(#9ab7d6,#b9d1ea);color:#111}
.dbody{margin:0 7px;height:533px;background:#f0f0f0;border:1px solid #fff;padding:1px 2px 0 4px;display:flex;flex-direction:column}
.dbar{display:flex;align-items:center;flex:none;white-space:nowrap}
.db1{height:31px;background:linear-gradient(#fff,#f0f0f0);gap:10px}
.grip{width:2px;height:14px;margin-left:4px;margin-right:-4px;background:repeating-linear-gradient(#aaa 0 2px,transparent 2px 4px);flex:none}
.db1 span{flex:none}
.db1 .on{border:1px solid #0078d7;background:#e8f1fa;padding:0 4px;height:23px;line-height:21px;margin-left:-5px;margin-right:-7px}
.db1 .sep{margin-right:-3px;height:18px}
.db1 .gg.end{margin-left:auto;margin-right:10px;align-self:flex-start;margin-top:6px}
.db2{height:27px}
.db2 .lab{margin-left:7px}
.db2 .grip{margin-right:-2px}
.dcombo{width:134px;height:24px;margin-left:1px;background:#fff;border:1px solid #0078d7;display:flex;align-items:center;justify-content:space-between;padding-left:2px;font:13px "Liberation Sans",sans-serif;letter-spacing:.4px}
.dbtn{width:12px;height:22px;background:#d6e6f5;display:flex;align-items:center;justify-content:center}
.canvas{margin-top:3px;height:441px;width:496px;flex:none;background:#000;border:2px solid #f00;position:relative;overflow:hidden}
.draw{position:absolute;left:0;top:0}
.gridlines path{stroke:#484848;stroke-dasharray:10 3 2 3;fill:none}
.axis text{fill:#3e3e3e;font:11px "Liberation Sans",sans-serif}
.cwhite{fill:none;stroke:#fff;stroke-width:2}
.cred{fill:none;stroke:#f00;stroke-width:3}
.hoops rect,.hoops path,.hoops circle{fill:none;stroke:#f00;stroke-width:2.500}
.hoops .hk{stroke-width:1.500}
.bars circle{fill:none;stroke:#1ec8d8}
.dim{stroke:#0f0;fill:none}
.dimend{fill:#0f0}
.lead{stroke:#ddd;fill:none}
.t400{fill:#fff;font:11px "Liberation Sans",sans-serif}
.tother{fill:#fff;font:12px "Noto Sans CJK SC",sans-serif}
.tgreen{fill:#0f0;font:12px "Liberation Mono",monospace;letter-spacing:-1px}
.floatpanel{position:absolute;left:8px;top:2px;width:200px;height:56px;border:1px solid #2a2a2a;background:#f0f0f0;display:flex;flex-direction:column}
.fpwhite{height:7px;background:#fff;flex:none}
.fphead{height:21px;background:#a0a0a0;color:#fff;padding-left:2px;line-height:21px;flex:none}
.fprow{flex:1;display:flex;align-items:center;padding-left:1px;white-space:nowrap}
.fprow span{flex:none}
.fprow .on{border:1px solid #0078d7;background:#dfeaf6;width:33px;height:24px;line-height:22px;text-align:center;margin-right:5px}
.line{margin-right:10px}
.arc{margin-right:7px}
.fprow .fpcombo{width:57px;height:24px;border:1px solid #777;background:#f4f4f4;margin-left:5px;display:flex;align-items:center;justify-content:flex-end;padding-right:4px}
.dstatus{display:flex;gap:2px;margin-top:7px;margin-left:-4px;height:21px;flex:none}
.ds1{width:148px;height:20px;background:#f0f0f0;border:1px solid #e2e2e2;font:12px/18px "Liberation Mono",monospace;letter-spacing:-1.2px;padding-left:8px;white-space:pre}
.ds2{flex:1;height:20px;border:1px solid #e2e2e2;background:#f0f0f0;line-height:18px;padding-left:1px;white-space:nowrap;overflow:hidden;letter-spacing:-.1px;position:relative}
.rgrip{position:absolute;right:1px;bottom:1px;width:8px;height:8px;background:radial-gradient(circle,#b0b0b0 1px,transparent 1px) 0 0/3px 3px}
```
